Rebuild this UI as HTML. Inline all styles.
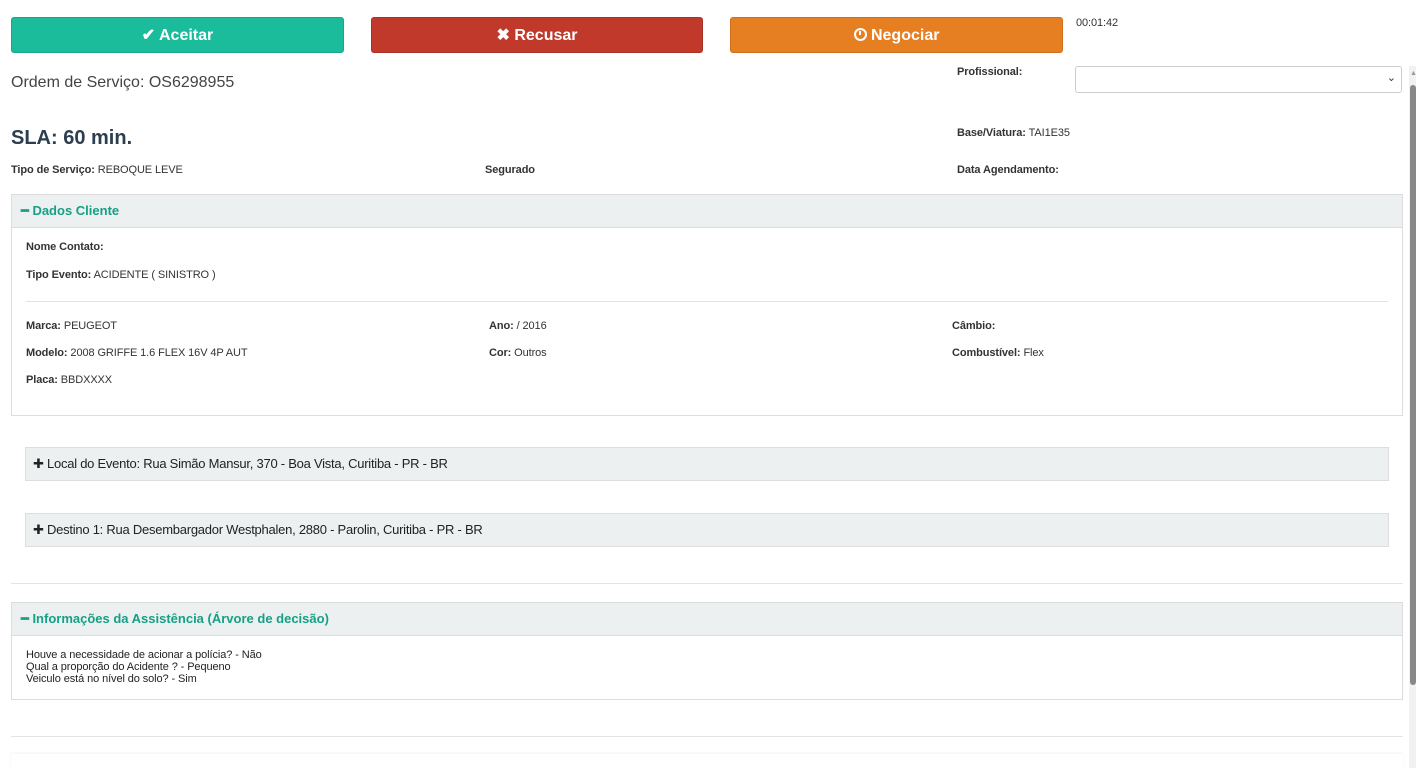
<!DOCTYPE html>
<html><head><meta charset="utf-8"><style>
*{margin:0;padding:0;box-sizing:border-box}
body{width:1416px;height:768px;overflow:hidden;background:#fff;font-family:"Liberation Sans",Arial,sans-serif;color:#333;position:relative}
.a{position:absolute;white-space:nowrap}
.btn{position:absolute;top:17px;height:36px;border-radius:3px;color:#fff;font-weight:bold;font-size:16px;text-align:center;line-height:35px}
.s{font-size:11px;letter-spacing:-0.1px}
b{font-weight:bold}
.box{position:absolute;border:1px solid #ddd}
.hd{position:absolute;background:#ecf0f1;border:1px solid #ddd}
.hr{position:absolute;height:1px;background:#e3e3e3}
.g{color:#16a085;font-weight:bold;font-size:13px}
.addr{font-size:13px;color:#222;letter-spacing:-0.25px}
</style></head><body>
<div class="btn" style="left:11px;width:333px;background:#1abc9c;border:1px solid #17a689">✔ Aceitar</div>
<div class="btn" style="left:371px;width:332px;background:#c0392b;border:1px solid #a93226">✖ Recusar</div>
<div class="btn" style="left:730px;width:333px;background:#e67e22;border:1px solid #d0701a"><span style="display:inline-block;width:13px;height:13px;border:2px solid #fff;border-radius:50%;vertical-align:-1px;position:relative"><span style="position:absolute;left:3px;top:1px;width:2px;height:4px;background:#fff"></span></span> Negociar</div>
<div class="a s" style="left:1076px;top:17px">00:01:42</div>
<div class="a" style="left:11px;top:74px;font-size:16px;color:#444">Ordem de Serviço: OS6298955</div>
<div class="a s" style="left:957px;top:66px"><b>Profissional:</b></div>
<div class="a" style="left:1075px;top:66px;width:327px;height:27px;border:1px solid #ccc;border-radius:3px"><span style="position:absolute;right:5px;top:4px;font-size:11px;color:#333">⌄</span></div>
<div class="a" style="left:11px;top:127px;font-size:20px;font-weight:bold;color:#2c3e50">SLA: 60 min.</div>
<div class="a s" style="left:957px;top:127px"><b>Base/Viatura:</b> TAI1E35</div>
<div class="a s" style="left:11px;top:164px"><b>Tipo de Serviço:</b> REBOQUE LEVE</div>
<div class="a s" style="left:485px;top:164px"><b>Segurado</b></div>
<div class="a s" style="left:957px;top:164px"><b>Data Agendamento:</b></div>

<div class="box" style="left:11px;top:194px;width:1392px;height:222px"></div>
<div class="hd" style="left:11px;top:194px;width:1392px;height:34px"></div>
<div class="a g" style="left:21px;top:203px">━ Dados Cliente</div>
<div class="a s" style="left:26px;top:241px"><b>Nome Contato:</b></div>
<div class="a s" style="left:26px;top:269px"><b>Tipo Evento:</b> ACIDENTE ( SINISTRO )</div>
<div class="hr" style="left:26px;top:301px;width:1362px"></div>
<div class="a s" style="left:26px;top:320px"><b>Marca:</b> PEUGEOT</div>
<div class="a s" style="left:489px;top:320px"><b>Ano:</b> / 2016</div>
<div class="a s" style="left:952px;top:320px"><b>Câmbio:</b></div>
<div class="a s" style="left:26px;top:347px"><b>Modelo:</b> 2008 GRIFFE 1.6 FLEX 16V 4P AUT</div>
<div class="a s" style="left:489px;top:347px"><b>Cor:</b> Outros</div>
<div class="a s" style="left:952px;top:347px"><b>Combustível:</b> Flex</div>
<div class="a s" style="left:26px;top:374px"><b>Placa:</b> BBDXXXX</div>

<div class="hd" style="left:25px;top:447px;width:1364px;height:34px"></div>
<div class="a addr" style="left:33px;top:456px">✚ Local do Evento: Rua Simão Mansur, 370 - Boa Vista, Curitiba - PR - BR</div>
<div class="hd" style="left:25px;top:513px;width:1364px;height:34px"></div>
<div class="a addr" style="left:33px;top:522px">✚ Destino 1: Rua Desembargador Westphalen, 2880 - Parolin, Curitiba - PR - BR</div>
<div class="hr" style="left:11px;top:583px;width:1392px"></div>

<div class="box" style="left:11px;top:602px;width:1392px;height:98px"></div>
<div class="hd" style="left:11px;top:602px;width:1392px;height:34px"></div>
<div class="a g" style="left:21px;top:611px">━ Informações da Assistência (Árvore de decisão)</div>
<div class="a" style="left:26px;top:649px;font-size:11px;line-height:12px;color:#222;letter-spacing:-0.1px">Houve a necessidade de acionar a polícia? - Não<br>Qual a proporção do Acidente ? - Pequeno<br>Veiculo está no nível do solo? - Sim</div>
<div class="hr" style="left:11px;top:736px;width:1392px"></div>
<div class="a" style="left:11px;top:754px;width:1392px;height:14px;box-shadow:0 -1px 3px rgba(0,0,0,0.05)"></div>

<div class="a" style="left:1409px;top:66px;width:7px;height:702px;background:#f1f1f1"></div>
<div class="a" style="left:1410px;top:85px;width:6px;height:600px;background:#888;border-radius:3px"></div>
<div class="a" style="left:1410px;top:70px;font-size:7px;color:#999">▲</div>
</body></html>
